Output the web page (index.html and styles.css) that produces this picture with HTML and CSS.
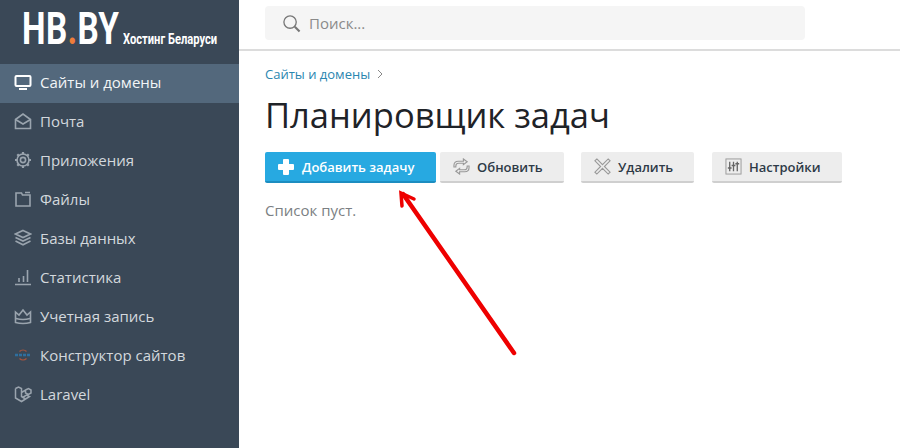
FILE: index.html
```html
<!DOCTYPE html>
<html lang="ru">
<head>
  <meta charset="UTF-8">
  <title>Планировщик задач</title>
  <link rel="stylesheet" href="styles.css">
</head>
<body>
  <div class="page">
    <aside class="sidebar">
      <div class="logo">
        <span class="logo-name">HB<span class="logo-dot">.</span>BY</span>
        <span class="logo-tag">Хостинг Беларуси</span>
      </div>
      <nav class="menu">
        <a class="menu-item active">
          <svg class="menu-icon" viewBox="0 0 18 18"><rect x="1.500" y="3" width="15" height="10" rx="1" fill="none" stroke="currentColor" stroke-width="2"/><path d="M5 16h8" stroke="currentColor" stroke-width="2"/></svg>
          Сайты и домены
        </a>
        <a class="menu-item">
          <svg class="menu-icon" viewBox="0 0 18 18" fill="none" stroke="currentColor" stroke-width="1.600"><path d="M1.500 7.500 9 2l7.500 5.500v9h-15z"/><path d="M1.500 7.500 9 12l7.500-4.500"/></svg>
          Почта
        </a>
        <a class="menu-item">
          <svg class="menu-icon" viewBox="0 0 18 18" fill="none" stroke="currentColor"><circle cx="9" cy="9" r="2.600" stroke-width="1.600"/><circle cx="9" cy="9" r="6" stroke-width="1.600"/><path d="M9 1v2.500M9 14.500V17M1 9h2.500M14.500 9H17M3.300 3.300l1.800 1.800M12.900 12.900l1.800 1.800M3.300 14.700l1.800-1.800M12.900 5.100l1.800-1.800" stroke-width="2.200"/></svg>
          Приложения
        </a>
        <a class="menu-item">
          <svg class="menu-icon" viewBox="0 0 18 18" fill="none" stroke="currentColor" stroke-width="1.600"><path d="M2 3v13h14V5H8.500L7.500 3zM11 2.500h5"/></svg>
          Файлы
        </a>
        <a class="menu-item">
          <svg class="menu-icon" viewBox="0 0 18 18" fill="none" stroke="currentColor" stroke-width="1.600"><path d="M9 1.500 16.500 5 9 8.500 1.500 5z"/><path d="M1.500 8.500 9 12l7.500-3.500M1.500 12 9 15.800l7.500-3.800"/></svg>
          Базы данных
        </a>
        <a class="menu-item">
          <svg class="menu-icon" viewBox="0 0 18 18" fill="none" stroke="currentColor" stroke-width="1.600"><path d="M1 16.500h16M5 14v-4M9.500 14V8M13.500 14V2"/></svg>
          Статистика
        </a>
        <a class="menu-item">
          <svg class="menu-icon" viewBox="0 0 18 18" fill="none" stroke="currentColor" stroke-width="1.600"><path d="M1.500 5 5 8l4-5 4 5 3.500-3v10.500q-7.500 2-15 0z"/><path d="M2 11.500q7 2 14 0"/></svg>
          Учетная запись
        </a>
        <a class="menu-item">
          <svg class="menu-icon" viewBox="0 0 18 18" fill="none"><path d="M5.500 5.500a5 5 0 0 1 7 0M5.500 12.500a5 5 0 0 0 7 0" stroke="#a5553f" stroke-width="1.300"/><path d="M1 9h16" stroke="#2f6f9f" stroke-width="2.600" stroke-dasharray="3 1"/></svg>
          Конструктор сайтов
        </a>
        <a class="menu-item">
          <svg class="menu-icon" viewBox="0 0 18 18" fill="none" stroke="currentColor" stroke-width="1.500"><path d="M1.500 3.500 4.500 2l3 1.500v8l4 2.500 4-2.500-3-1.500-4 2.500M1.500 3.500V13l6 3.500 4-2.500M7.500 7.500l4-2.500V8l3 1.500 2.500-1.500V5l-2.500-1.500L11.500 5"/></svg>
          Laravel
        </a>
      </nav>
    </aside>

    <div class="content">
      <header class="topbar">
        <div class="search">
          <svg class="search-icon" viewBox="0 0 20 20" fill="none" stroke="#777"><circle cx="8.500" cy="8.500" r="6.500" stroke-width="1.400"/><path d="m13.500 13.500 5 5" stroke-width="2.200"/></svg>
          <span class="search-text">Поиск...</span>
        </div>
      </header>

      <main class="body">
        <div class="crumbs">
          <a class="crumb">Сайты и домены</a>
          <svg class="crumb-sep" viewBox="0 0 8 10" fill="none" stroke="#888" stroke-width="1"><path d="m2 1 4 4-4 4"/></svg>
        </div>
        <h1 class="title">Планировщик задач</h1>
        <div class="toolbar">
          <button class="btn btn-primary btn-add">
            <svg class="btn-icon" viewBox="0 0 16 16" fill="#fff"><path d="M5 1q0-1 1-1h4q1 0 1 1v4h4q1 0 1 1v4q0 1-1 1h-4v4q0 1-1 1H6q-1 0-1-1v-4H1q-1 0-1-1V6q0-1 1-1h4z"/></svg>
            Добавить задачу
          </button>
          <button class="btn btn-refresh">
            <svg class="btn-icon-lg" viewBox="0 0 18 18" fill="none" stroke="#999" stroke-width="1.200"><path d="M11 1l4 3-4 3V5.500H6Q3 5.500 3 8.500v1H1V8q0-4.500 4.500-4.500H11zM7 17l-4-3 4-3v1.500h5q3 0 3-3v-1h2V10q0 4.500-4.500 4.500H7z"/></svg>
            Обновить
          </button>
          <button class="btn btn-delete">
            <svg class="btn-icon-lg" viewBox="0 0 18 18" fill="none" stroke="#999" stroke-width="1.200"><path d="M3 1 9 7l6-6 2 2-6 6 6 6-2 2-6-6-6 6-2-2 6-6-6-6z"/></svg>
            Удалить
          </button>
          <button class="btn btn-settings">
            <svg class="btn-icon-lg" viewBox="0 0 18 18" fill="none" stroke="#666"><rect x="1" y="1" width="16" height="16" stroke="#999" stroke-width="1"/><path d="M5 4v10M9 4v10M13 4v10" stroke-width="1.400"/><path d="M3 10.500h4M7 8h4M11 6h4" stroke-width="1.600"/></svg>
            Настройки
          </button>
        </div>
        <p class="empty">Список пуст.</p>
      </main>
    </div>
  </div>

  <svg class="arrow" viewBox="0 0 900 448" fill="none" stroke="#ee0000" stroke-linecap="round">
    <path d="M514 353 403 194" stroke-width="4.500"/>
    <path d="M402 206 401 193 414 199" stroke-width="3.500"/>
  </svg>
</body>
</html>
```

FILE: styles.css
```css
* {
  box-sizing: border-box;
  margin: 0;
  padding: 0;
}

html, body {
  height: 100%;
  overflow: hidden;
}

body {
  font-family: "Open Sans", sans-serif;
  background: #fff;
  position: relative;
}

.page {
  display: flex;
  height: 448px;
}

.sidebar {
  width: 239px;
  flex-shrink: 0;
  background: #3a4857;
}

.logo {
  height: 64px;
  padding: 7px 0 0 22px;
  display: flex;
  align-items: flex-start;
  color: #fff;
}

.logo-name {
  font-family: "Roboto", sans-serif;
  font-weight: 700;
  font-size: 45px;
  line-height: 44px;
  width: 101px;
  display: inline-block;
  transform: scaleX(0.74);
  transform-origin: left center;
  white-space: nowrap;
  letter-spacing: 0.5px;
}

.logo-dot {
  color: #ee7d3a;
}

.logo-tag {
  font-family: "Roboto", sans-serif;
  font-weight: 700;
  font-size: 14.500px;
  line-height: 16px;
  margin: 25px 0 0 0;
  white-space: nowrap;
  display: inline-block;
  transform: scaleX(0.77);
  transform-origin: left center;
}

.menu {
  display: flex;
  flex-direction: column;
}

.menu-item {
  height: 39px;
  padding: 0 0 3px 14px;
  display: flex;
  align-items: center;
  gap: 8px;
  font-size: 15px;
  color: #d3d8dd;
}

.menu-item .menu-icon {
  color: #9aa4ae;
}

.menu-item.active {
  background: #53687c;
  color: #f2f5f7;
}

.menu-item.active .menu-icon {
  color: #fff;
}

.menu-icon {
  width: 18px;
  height: 18px;
  flex-shrink: 0;
}

.content {
  flex: 1;
  min-width: 0;
}

.topbar {
  height: 51px;
  padding: 6px 0 0 26px;
  border-bottom: 2px solid #dcdcdc;
}

.search {
  width: 540px;
  height: 34px;
  background: #f5f5f5;
  border-radius: 4px;
  display: flex;
  align-items: center;
  padding-left: 17px;
  gap: 8px;
}

.search-icon {
  width: 19px;
  height: 19px;
}

.search-text {
  font-size: 15px;
  color: #8a8a8a;
}

.body {
  padding: 14px 0 0 26px;
}

.crumbs {
  display: flex;
  align-items: center;
  gap: 6px;
  height: 18px;
}

.crumb {
  font-size: 13px;
  color: #2a86b0;
}

.crumb-sep {
  width: 8px;
  height: 10px;
}

.title {
  font-weight: 400;
  font-size: 34.500px;
  line-height: 44px;
  margin-top: 10px;
  color: #1f2328;
}

.toolbar {
  display: flex;
  margin-top: 15px;
}

.btn {
  height: 31px;
  border: none;
  border-bottom: 2px solid #cfcfcf;
  border-radius: 2px;
  background: #ededed;
  font-family: inherit;
  font-size: 13px;
  font-weight: 600;
  color: #2d3a47;
  display: flex;
  align-items: center;
  gap: 7px;
  padding: 0 0 0 13px;
}

.btn-primary {
  background: #27a9e1;
  border-bottom-color: #1c8dc0;
  color: #fff;
}

.btn-add {
  width: 171px;
  gap: 8px;
  margin-right: 4px;
}

.btn-refresh {
  width: 124px;
  margin-right: 17px;
}

.btn-delete {
  width: 113px;
  margin-right: 18px;
}

.btn-settings {
  width: 130px;
}

.btn-icon {
  width: 16px;
  height: 16px;
}

.btn-icon-lg {
  width: 17px;
  height: 17px;
}

.empty {
  font-size: 15px;
  line-height: 20px;
  margin-top: 17px;
  color: #7b7f83;
}

.arrow {
  position: absolute;
  left: 0;
  top: 0;
  width: 900px;
  height: 448px;
  pointer-events: none;
}
```
